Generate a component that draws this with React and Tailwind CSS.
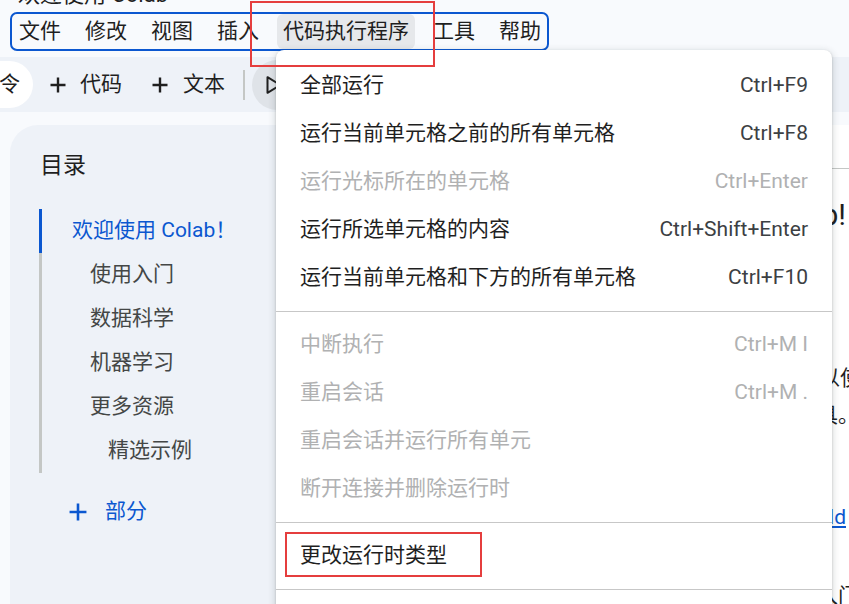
import React from "react";

const menuBar = ["文件", "修改", "视图", "插入", "代码执行程序", "工具", "帮助"];

const dropdown = [
  { label: "全部运行", sc: "Ctrl+F9" },
  { label: "运行当前单元格之前的所有单元格", sc: "Ctrl+F8" },
  { label: "运行光标所在的单元格", sc: "Ctrl+Enter", dis: true },
  { label: "运行所选单元格的内容", sc: "Ctrl+Shift+Enter" },
  { label: "运行当前单元格和下方的所有单元格", sc: "Ctrl+F10" },
  "sep",
  { label: "中断执行", sc: "Ctrl+M I", dis: true },
  { label: "重启会话", sc: "Ctrl+M .", dis: true },
  { label: "重启会话并运行所有单元", dis: true },
  { label: "断开连接并删除运行时", dis: true },
  "sep",
  { label: "更改运行时类型" },
  "sep",
  { label: "管理会话" },
];

const toc = [
  { label: "欢迎使用 Colab！", indent: "pl-[30px]", active: true },
  { label: "使用入门", indent: "pl-[48px]" },
  { label: "数据科学", indent: "pl-[48px]" },
  { label: "机器学习", indent: "pl-[48px]" },
  { label: "更多资源", indent: "pl-[48px]" },
  { label: "精选示例", indent: "pl-[66px]" },
];

function PlusIcon({ size = 16, color = "#1f1f1f", w = 2.4 }) {
  return (
    <svg width={size} height={size} viewBox="0 0 16 16" fill="none">
      <path d="M8 0.5V15.5M0.5 8H15.5" stroke={color} strokeWidth={w} />
    </svg>
  );
}

function PlayIcon() {
  return (
    <svg width="22" height="22" viewBox="0 0 24 24" fill="none">
      <path d="M6 3.5L20 12L6 20.5Z" stroke="#1f1f1f" strokeWidth="2.2" strokeLinejoin="round" />
    </svg>
  );
}

export default function App() {
  return (
    <div className="relative w-[849px] h-[604px] overflow-hidden bg-[#f8fafd] font-['Roboto','Noto_Sans_CJK_SC',sans-serif] text-[#1f1f1f]">
      {/* title (cut off at the top) */}
      <div className="flex h-[12px] items-start pl-[18px]">
        <div className="-mt-[17px] whitespace-nowrap text-[22px] leading-[24px]">欢迎使用 Colab</div>
      </div>

      {/* menu bar */}
      <div className="flex pl-[10px]">
        <div className="flex h-[39px] items-center gap-[12px] rounded-[7px] border-2 border-[#0b57d0] pl-px">
          {menuBar.map((m) => (
            <div
              key={m}
              className={
                "flex h-[35px] items-center rounded-[6px] px-[6px] text-[21px] leading-none " +
                (m === "代码执行程序" ? "bg-[#e6e8eb]" : "")
              }
            >
              {m}
            </div>
          ))}
        </div>
      </div>

      <div className="h-[6px]" />

      {/* toolbar */}
      <div className="flex h-[55px] items-center bg-[#eef2f8]">
        <div className="-ml-[38px] flex h-[47px] shrink-0 items-center rounded-full bg-white pl-[16px] pr-[13px] text-[21px]">
          命令
        </div>
        <div className="ml-[5px] flex shrink-0 items-center gap-[14px] px-[12px] text-[21px]">
          <PlusIcon />
          <span>代码</span>
        </div>
        <div className="ml-[6px] flex shrink-0 items-center gap-[15px] px-[12px] text-[21px]">
          <PlusIcon />
          <span>文本</span>
        </div>
        <div className="ml-[6px] h-[30px] w-[2px] shrink-0 bg-[#c4c7c5]" />
        <div className="ml-[7px] flex h-[50px] w-[50px] shrink-0 items-center rounded-full bg-[#dfe3e8] pl-[10px]">
          <PlayIcon />
        </div>
      </div>

      <div className="h-[13px]" />

      {/* body */}
      <div className="flex h-[479px] pl-[10px]">
        {/* sidebar */}
        <div className="w-[272px] shrink-0 rounded-tl-[28px] bg-[#eef2f8] pt-[25px]">
          <div className="pl-[30px] text-[23px] leading-[32px]">目录</div>
          <div className="ml-[29px] mt-[27px] border-l-[3px] border-[#c4c7c5]">
            {toc.map((t) => (
              <div
                key={t.label}
                className={
                  "flex h-[44px] items-center whitespace-nowrap text-[21px] " +
                  (t.active
                    ? "-ml-[3px] border-l-[3px] border-[#0b57d0] text-[#0b57d0] " + t.indent
                    : "text-[#444746] " + t.indent)
                }
              >
                {t.label}
              </div>
            ))}
          </div>
          <div className="mt-[17px] flex h-[44px] items-center gap-[18px] pl-[59px] text-[21px] text-[#0b57d0]">
            <PlusIcon size={18} color="#0b57d0" w={2.3} />
            <span>部分</span>
          </div>
        </div>

        {/* main notebook */}
        <div className="min-w-0 flex-1 overflow-hidden bg-white">
          <div className="h-[44px] border-b border-[#c4c7c5]" />
          <div className="mt-[28px] whitespace-nowrap pr-[3px] text-right text-[30px] leading-[36px]">
            欢迎使用 Colab!
          </div>
          <div className="mt-[131px] whitespace-nowrap pl-[537px] text-[21px] leading-[28px]">以使用</div>
          <div className="mt-[9px] whitespace-nowrap pl-[514px] text-[21px] leading-[28px]">工具。</div>
          <div className="mt-[74px] whitespace-nowrap pr-[3px] text-right text-[21px] leading-[28px] text-[#0b57d0] underline">
            Hello World
          </div>
          <div className="mt-[51px] whitespace-nowrap pl-[535px] text-[21px] leading-[28px]">入门</div>
        </div>
      </div>

      {/* dropdown menu */}
      <div className="absolute left-[276px] top-[50px] h-[600px] w-[556px] rounded-[8px] bg-white pt-[12px] shadow-[0_2px_6px_2px_rgba(60,64,67,0.15),0_1px_2px_rgba(60,64,67,0.3)]">
        {dropdown.map((it, i) =>
          it === "sep" ? (
            <div key={i} className="my-[9px] h-px bg-[#c7c7c7]" />
          ) : (
            <div
              key={i}
              className={
                "flex h-[48px] items-center justify-between whitespace-nowrap px-[24px] text-[21px] " +
                (it.dis ? "text-[#b0b1b2]" : "text-[#1f1f1f]")
              }
            >
              <span>{it.label}</span>
              {it.sc && <span className={it.dis ? "text-[#b0b1b2]" : "text-[#3c4043]"}>{it.sc}</span>}
            </div>
          )
        )}
      </div>

      {/* red annotation rectangles */}
      <div className="pointer-events-none absolute left-[250px] top-px h-[66px] w-[185px] border-2 border-[#e53e3e]" />
      <div className="pointer-events-none absolute left-[285px] top-[532px] h-[45px] w-[197px] border-2 border-[#e53e3e]" />
    </div>
  );
}
